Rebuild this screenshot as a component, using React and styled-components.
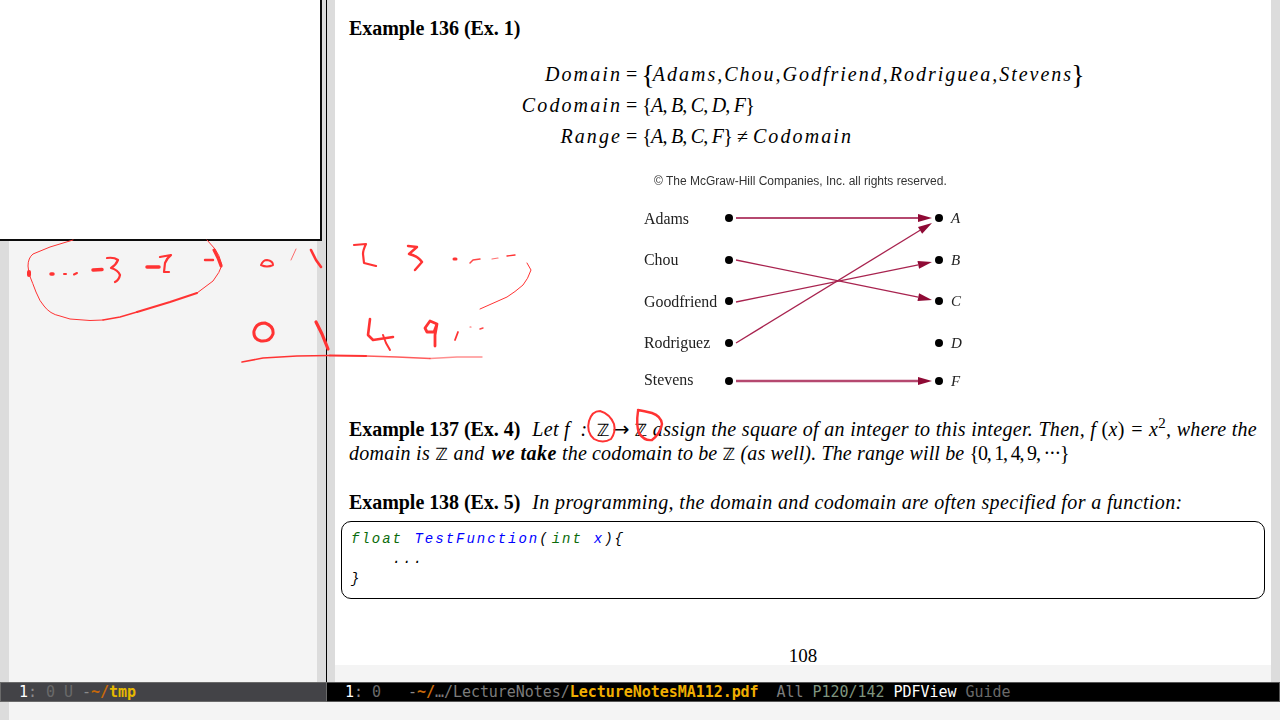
import React from 'react'
import styled, { createGlobalStyle } from 'styled-components'

const RED = '#ff3333'

const GlobalStyle = createGlobalStyle`
    html, body {
        margin: 0;
        padding: 0;
        background: #f4f4f4;
    }
`

function Z({ $before }) {
    return <Blackboard $before={$before}>ℤ</Blackboard>
}

const inkStrokes = [
    // loop round the negatives
    { d: 'M73 240 L50 247 L33 254 Q28 258 28 266 L29 274', w: 1 },
    { d: 'M29 274 Q33 284 36 292 Q40 302 44 306 Q50 314 60 316 L70 319 L90 320.5 L103 320', w: 1 },
    { d: 'M103 320 L120 317 L137 312', w: 1.4 },
    { d: 'M137 312 L170 302 L197 293', w: 2 },
    { d: 'M197 293 L213 281 Q220 272 222 265 Q219 254 215 249 L207 240', w: 1 },
    { d: 'M29 272 L29 275', w: 4 },
    // dots and negatives
    { d: 'M51 274 L53 274', w: 3.5 },
    { d: 'M64 274 L66 274', w: 2 },
    { d: 'M74 274.5 L77 273', w: 2 },
    { d: 'M93 270 L102 269.5', w: 3.5 },
    { d: 'M107 258 Q114 257 118 260 Q116 265 111 268 Q118 270 120 275 Q119 280 115 282', w: 2.2 },
    { d: 'M147 267 L159 267', w: 3.5 },
    { d: 'M160 257 L171 255 Q167 258 165 263 L164 272 L169 272', w: 2.2 },
    { d: 'M205 260 L213 260', w: 2.4 },
    { d: 'M214 250 L218 258 L221 266', w: 3 },
    // 0 1 2 3 on the top row
    { d: 'M261 265 Q263 260 267 260 Q273 261 273 265 Q267 268 261 265 Z', w: 2 },
    { d: 'M296 249 L291 260', w: 1, o: 0.7 },
    { d: 'M311 250 L316 260 L321 267', w: 2.6 },
    { d: 'M354 245 L366 244 Q363 250 363 254 L364 263 L376 266', w: 2.2 },
    { d: 'M408 246 L417 247 L409 254 Q418 256 422 262 L415 270', w: 2.4 },
    { d: 'M454 259 L456 259', w: 3 },
    { d: 'M470 263 L473 260 L480 259', w: 1.5, o: 0.9 },
    { d: 'M492 259 L498 258', w: 1.2, o: 0.7 },
    { d: 'M507 256 L515 255', w: 1.4 },
    { d: 'M527 263 L531 270 Q528 279 523 285 Q515 292 507 297 L480 309', w: 1 },
    // squares on the lower row
    { d: 'M254 331 Q256 323 265 323 Q274 326 273 334 Q270 342 261 341 Q253 339 254 331 Z', w: 3 },
    { d: 'M316 322 L322 334 L328 349', w: 3.2 },
    { d: 'M370 319 L368 335 L373 340 L393 337', w: 2.6 },
    { d: 'M383 335 L386 343 L390 350', w: 2 },
    { d: 'M437 324 L430 321 L425 328 L427 332 L434 332 L437 324 L435 335 L435 346', w: 2.8 },
    { d: 'M458 332 L455 340', w: 1.8 },
    { d: 'M470 327 L471 327', w: 1.2, o: 0.8 },
    { d: 'M480 329 L483 328', w: 1.4, o: 0.9 },
    { d: 'M242 362 L263 358 L297 356 L330 355.5', w: 1.6 },
    { d: 'M330 355.5 L366 356', w: 2.2 },
    { d: 'M366 356 L397 357 L430 358.5', w: 1.4, o: 0.8 },
    { d: 'M430 358.5 L457 357 L482 357', w: 1.4, o: 0.55 },
    // circles on the two Z
    { d: 'M600 411 Q592 411 589 421 Q586 432 594 439 Q603 444 611 439 Q616 432 614 424 Q610 414 600 411', w: 2 },
    { d: 'M638 411 Q636 425 639 433 Q644 441 652 440 Q660 434 662 424 Q661 416 652 413 Q644 411 638 410', w: 2.4 },
]

const leftDots = [218, 260, 301, 343, 381]
const names = [
    ['Adams', 224],
    ['Chou', 265],
    ['Goodfriend', 307],
    ['Rodriguez', 348],
    ['Stevens', 385],
]
const grades = [
    ['A', 218],
    ['B', 260],
    ['C', 301],
    ['D', 343],
    ['F', 381],
]
const arrows = [
    [736, 218, 932, 218, 2, '#b5486f'],
    [736, 260, 932, 300, 1.3, '#a8234f'],
    [736, 302, 932, 262, 1.3, '#a8234f'],
    [736, 343, 932, 223, 1.3, '#a8234f'],
    [736, 381, 932, 381, 2.4, '#b5486f'],
]

function Arrow({ x1, y1, x2, y2, width, color }) {
    const a = Math.atan2(y2 - y1, x2 - x1)
    const bx = x2 - Math.cos(a) * 14
    const by = y2 - Math.sin(a) * 14
    const nx = -Math.sin(a) * 4
    const ny = Math.cos(a) * 4
    return (
        <g>
            <line x1={x1} y1={y1} x2={bx} y2={by} stroke={color} strokeWidth={width} />
            <polygon points={`${x2},${y2} ${bx + nx},${by + ny} ${bx - nx},${by - ny}`} fill="#8f0a35" />
        </g>
    )
}

function RelationFigure() {
    return (
        <FigureSvg viewBox="640 172 340 220" width="340" height="220">
            <text x="654" y="185" fontFamily="'Liberation Sans', sans-serif" fontSize="12" fill="#333">
                © The McGraw-Hill Companies, Inc. all rights reserved.
            </text>
            {names.map(([name, y]) => (
                <text key={name} x="644" y={y} fontFamily="'Liberation Serif', serif" fontSize="15.9" fill="#222">
                    {name}
                </text>
            ))}
            {arrows.map(([x1, y1, x2, y2, w, c], i) => (
                <Arrow key={i} x1={x1} y1={y1} x2={x2} y2={y2} width={w} color={c} />
            ))}
            {leftDots.map((y) => (
                <circle key={y} cx="729" cy={y} r="4" fill="#000" />
            ))}
            {grades.map(([g, y]) => (
                <g key={g}>
                    <circle cx="939" cy={y} r="4" fill="#000" />
                    <text x="951" y={y + 5} fontFamily="'Liberation Serif', serif" fontStyle="italic" fontSize="15" fill="#222">
                        {g}
                    </text>
                </g>
            ))}
        </FigureSvg>
    )
}

function ModeLine({ dim, children }) {
    return <ModeBar $dim={dim}>{children}</ModeBar>
}

export default function App() {
    return (
        <Screen>
            <GlobalStyle />
            <Windows>
                <LeftWindow>
                    <Body $divider>
                        <Fringe />
                        <Blank />
                        <Fringe />
                    </Body>
                    <ModeLine dim>
                        <White>  1</White><Grey>: </Grey><Dark>0 U </Dark><Grey>-</Grey><Tilde>~/</Tilde><Dir>tmp</Dir>
                    </ModeLine>
                    <ChildFrame />
                </LeftWindow>
                <RightWindow>
                    <Body>
                        <Fringe $width={8} />
                        <PageColumn>
                            <Page>
                                <Line>
                                    <Head>Example 136 (Ex. 1)</Head>
                                </Line>
                                <Equations>
                                    <EqLeft>Domain</EqLeft>
                                    <EqRight>
                                        = <BigBrace $side="open">{'{'}</BigBrace><MathWord $spacing={2}>Adams,Chou,Godfriend,Rodriguea,Stevens</MathWord><BigBrace $side="close">{'}'}</BigBrace>
                                    </EqRight>
                                    <EqLeft>Codomain</EqLeft>
                                    <EqRight>= <SetList>{'{'}<em>A</em>, <em>B</em>, <em>C</em>, <em>D</em>, <em>F</em>{'}'}</SetList></EqRight>
                                    <EqLeft>Range</EqLeft>
                                    <EqRight>= <SetList>{'{'}<em>A</em>, <em>B</em>, <em>C</em>, <em>F</em>{'}'}</SetList> ≠ <MathWord>Codomain</MathWord></EqRight>
                                </Equations>
                                <RelationFigure />
                                <Para>
                                    <Line>
                                        <Head>Example 137 (Ex. 4)</Head>
                                        <Sentence $spacing={0.31}>
                                            Let <em>f</em> &nbsp;: <Z $before={4} /><Arrowed>→</Arrowed><Z /> assign the square of an integer to this integer. Then, <em>f</em> <Upright>(</Upright><em>x</em><Upright>)</Upright> = <em>x</em><Sup>2</Sup>, where the
                                        </Sentence>
                                    </Line>
                                    <Line>
                                        <Sentence $spacing={0.3}>
                                            domain is <Z /> and <Emph>we take</Emph>
                                            <Sentence $spacing={0.14}> the codomain to be <Z /> (as well). The range will be </Sentence>
                                            <Upright $tight>{'{'}0, 1, 4, 9, ···{'}'}</Upright>
                                        </Sentence>
                                    </Line>
                                </Para>
                                <Para>
                                    <Line>
                                        <Head>Example 138 (Ex. 5)</Head>
                                        <Sentence $spacing={0.38}>
                                            In programming, the domain and codomain are often specified for a function:
                                        </Sentence>
                                    </Line>
                                </Para>
                                <CodeBox>
                                    <CodeLine>
                                        <Kw $after={1}>float</Kw> <Fn>TestFunction</Fn><CodeMark $after={2}>(</CodeMark><Kw $after={0.5}>int</Kw> <Fn>x</Fn>){'{'}
                                    </CodeLine>
                                    <CodeLine>    ...</CodeLine>
                                    <CodeLine>{'}'}</CodeLine>
                                </CodeBox>
                                <PageNumber>108</PageNumber>
                            </Page>
                        </PageColumn>
                        <Fringe />
                    </Body>
                    <ModeLine>
                        <White>  1</White><Grey>: </Grey><Dark>0   </Dark><Grey>-</Grey><Tilde>~/</Tilde><Path>…/LectureNotes/</Path><File>LectureNotesMA112.pdf</File><Path>  All </Path><Pos>P120/142 </Pos><White>PDFView </White><Dark>Guide</Dark>
                    </ModeLine>
                </RightWindow>
            </Windows>
            <Echo>
                <Fringe />
            </Echo>
            <InkLayer viewBox="0 0 1280 720" width="1280" height="720">
                {inkStrokes.map((s, i) => (
                    <path
                        key={i}
                        d={s.d}
                        fill="none"
                        stroke={RED}
                        strokeWidth={s.w}
                        strokeOpacity={s.o || 1}
                        strokeLinecap="round"
                        strokeLinejoin="round"
                    />
                ))}
            </InkLayer>
        </Screen>
    )
}

const Screen = styled.div`
    position: relative;
    width: 1280px;
    height: 720px;
    overflow: hidden;
    display: flex;
    flex-direction: column;
    background: #f4f4f4;
`

const Windows = styled.div`
    display: flex;
    height: 702px;
`

const LeftWindow = styled.div`
    position: relative;
    width: 327px;
    display: flex;
    flex-direction: column;
`

const RightWindow = styled.div`
    flex: 1;
    min-width: 0;
    display: flex;
    flex-direction: column;
`

const Body = styled.div`
    flex: 1;
    min-height: 0;
    display: flex;
    border-right: ${(p) => (p.$divider ? '1px solid #000' : 'none')};
`

const Fringe = styled.div`
    flex: none;
    width: ${(p) => p.$width || 9}px;
    background: #dcdcdc;
`

const Blank = styled.div`
    flex: 1;
    background: #f4f4f4;
`

const ChildFrame = styled.div`
    position: absolute;
    left: 0;
    top: 0;
    width: 320px;
    height: 239px;
    background: #fff;
    border-right: 2px solid #0c0c0c;
    border-bottom: 2px solid #0c0c0c;
`

const ModeBar = styled.div`
    flex: none;
    box-sizing: border-box;
    height: 20px;
    line-height: 18px;
    border: 1px solid ${(p) => (p.$dim ? '#6a6a6a' : '#555')};
    border-left-width: ${(p) => (p.$dim ? 1 : 0)}px;
    background: ${(p) => (p.$dim ? '#434347' : '#000')};
    font-family: 'DejaVu Sans Mono', monospace;
    font-size: 15px;
    letter-spacing: -0.04px;
    white-space: pre;
    overflow: hidden;
    color: #888;
`

const White = styled.span`
    color: #fff;
`

const Grey = styled.span`
    color: #8a8a8a;
`

const Dark = styled.span`
    color: #6a6a6a;
`

const Tilde = styled.span`
    color: #c8690a;
    font-weight: bold;
`

const Dir = styled.span`
    color: #e6b800;
    font-weight: bold;
`

const File = styled.span`
    color: #f0ae00;
    font-weight: bold;
`

const Path = styled.span`
    color: #7c7c7c;
`

const Pos = styled.span`
    color: #7f957f;
`

const PageColumn = styled.div`
    flex: 1;
    min-width: 0;
    background: #f4f4f4;
`

const Page = styled.div`
    box-sizing: border-box;
    height: 665px;
    padding: 16px 14px 0;
    background: #fff;
    color: #000;
    font-family: 'Liberation Serif', 'DejaVu Sans', serif;
    font-size: 20px;
    overflow: hidden;
`

const Line = styled.div`
    height: 24px;
    line-height: 24px;
    white-space: pre;
`

const Head = styled.span`
    font-weight: bold;
    letter-spacing: -0.05px;
    margin-right: 12px;
`

const Sentence = styled.span`
    font-style: italic;
    letter-spacing: ${(p) => p.$spacing || 0}px;
    em {
        font-style: italic;
    }
`

const Emph = styled.b`
    margin-left: 2px;
    letter-spacing: 0.5px;
`

const Upright = styled.span`
    font-style: normal;
    letter-spacing: ${(p) => (p.$tight ? '-1.2px' : 'inherit')};
`

const Blackboard = styled.span`
    font-family: 'DejaVu Sans', sans-serif;
    font-style: normal;
    font-size: 17px;
    margin-left: ${(p) => p.$before || 0}px;
`

const Arrowed = styled.span`
    font-family: 'DejaVu Sans', sans-serif;
    font-style: normal;
    font-size: 20px;
    line-height: 20px;
    letter-spacing: 0;
    margin: 0 5px 0 3px;
`

const Sup = styled.sup`
    font-style: normal;
    font-size: 15px;
    line-height: 0;
`

const Equations = styled.div`
    display: grid;
    grid-template-columns: 273px auto;
    grid-auto-rows: 31px;
    align-items: center;
    column-gap: 4px;
    margin-top: 19px;
    font-size: 20px;
`

const EqLeft = styled.div`
    text-align: right;
    font-style: italic;
    letter-spacing: 2.1px;
`

const EqRight = styled.div`
    white-space: nowrap;
`

const SetList = styled.span`
    letter-spacing: -0.8px;
    em {
        font-style: italic;
    }
`

const MathWord = styled.span`
    font-style: italic;
    letter-spacing: ${(p) => p.$spacing || 2.1}px;
`

const BigBrace = styled.span`
    font-size: 28px;
    line-height: 20px;
    vertical-align: -3px;
    margin: ${(p) => (p.$side === 'open' ? '0 0 0 -1px' : '0 0 0 -2px')};
    letter-spacing: ${(p) => (p.$side === 'open' ? '-2px' : '0')};
`

const FigureSvg = styled.svg`
    display: block;
    margin: 20px 0 0 291px;
    filter: blur(0.4px);
`

const Para = styled.div`
    margin-top: 25px;
`

const CodeBox = styled.div`
    box-sizing: border-box;
    width: 924px;
    height: 78px;
    margin: 7px 0 0 -8px;
    padding: 7px 9px;
    border: 1px solid #000;
    border-radius: 10px;
`

const CodeLine = styled.div`
    height: 20px;
    line-height: 20px;
    white-space: pre;
    font-family: 'Liberation Mono', monospace;
    font-style: italic;
    font-size: 14px;
    letter-spacing: 2px;
    color: #000;
`

const CodeMark = styled.span`
    margin-right: ${(p) => p.$after || 0}px;
`

const Kw = styled.span`
    color: #0a6b0a;
    margin-right: ${(p) => p.$after || 0}px;
`

const Fn = styled.span`
    color: #0000ff;
`

const PageNumber = styled.div`
    margin-top: 45px;
    height: 24px;
    line-height: 24px;
    text-align: center;
    font-size: 19px;
`

const Echo = styled.div`
    flex: 1;
    display: flex;
    background: #f4f4f4;
`

const InkLayer = styled.svg`
    position: absolute;
    left: 0;
    top: 0;
    pointer-events: none;
`
